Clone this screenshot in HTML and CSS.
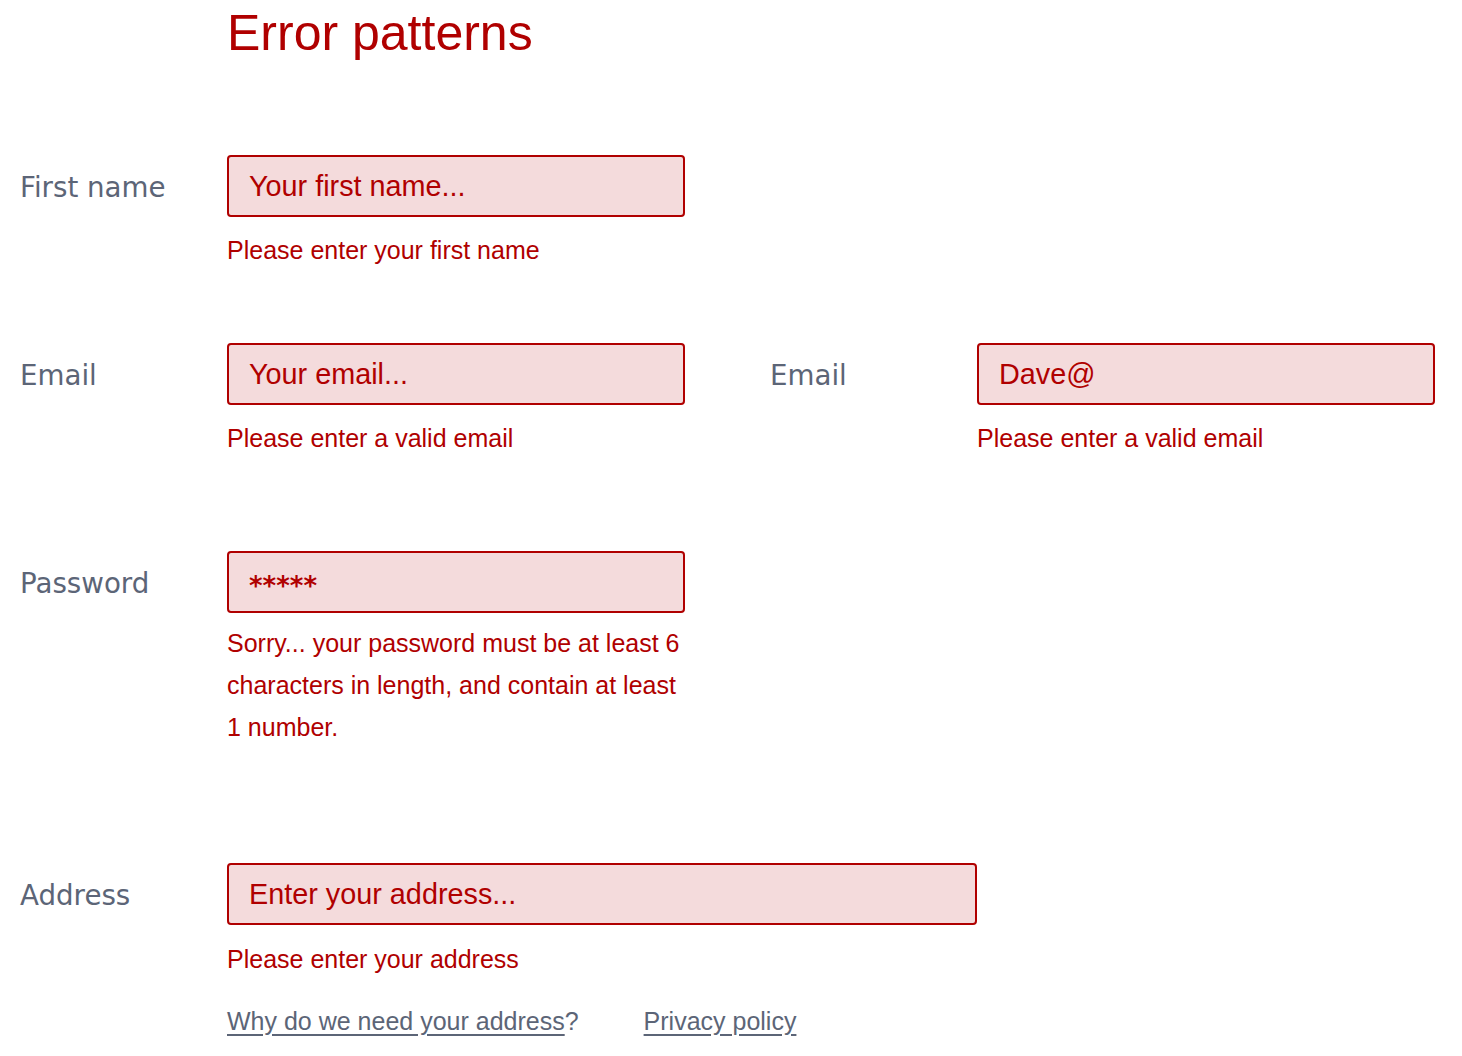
FILE: index.html
```html
<!DOCTYPE html>
<html lang="en">
<head>
<meta charset="utf-8">
<title>Error patterns</title>
<link rel="stylesheet" href="styles.css">
</head>
<body>
<main class="page">
  <h1 class="title">Error patterns</h1>

  <div class="row row-name">
    <div class="field">
      <label class="label" for="fname">First name</label>
      <div class="control">
        <input class="input" id="fname" type="text" placeholder="Your first name...">
        <p class="error">Please enter your first name</p>
      </div>
    </div>
  </div>

  <div class="row row-email">
    <div class="field">
      <label class="label" for="email1">Email</label>
      <div class="control">
        <input class="input" id="email1" type="text" placeholder="Your email...">
        <p class="error">Please enter a valid email</p>
      </div>
    </div>
    <div class="field">
      <label class="label" for="email2">Email</label>
      <div class="control">
        <input class="input" id="email2" type="text" value="Dave@">
        <p class="error">Please enter a valid email</p>
      </div>
    </div>
  </div>

  <div class="row row-password">
    <div class="field">
      <label class="label" for="pw">Password</label>
      <div class="control">
        <input class="input input-pw" id="pw" type="text" value="*****">
        <p class="error error-pw">Sorry... your password must be at least 6 characters in length, and contain at least 1 number.</p>
      </div>
    </div>
  </div>

  <div class="row row-address">
    <div class="field">
      <label class="label" for="addr">Address</label>
      <div class="control control-wide">
        <input class="input" id="addr" type="text" placeholder="Enter your address...">
        <p class="error error-addr">Please enter your address</p>
        <div class="links">
          <span class="link-item"><a class="link" href="#">Why do we need your address</a>?</span>
          <span class="link-item"><a class="link" href="#">Privacy policy</a></span>
        </div>
      </div>
    </div>
  </div>
</main>
</body>
</html>
```

FILE: styles.css
```css
* {
  box-sizing: border-box;
}

html, body {
  margin: 0;
  padding: 0;
  background: #ffffff;
}

body {
  font-family: "Liberation Sans", Arial, sans-serif;
  color: #b00000;
}

.page {
  padding: 5px 0 0 20px;
}

.title {
  margin: 0 0 0 207px;
  font-size: 50px;
  line-height: 57px;
  font-weight: 400;
  color: #b00000;
}

.row {
  display: flex;
  gap: 85px;
}

.row-name { margin-top: 93px; }
.row-email { margin-top: 72px; }
.row-password { margin-top: 92px; }
.row-address { margin-top: 115px; }

.field {
  display: flex;
}

.label {
  width: 207px;
  height: 62px;
  display: flex;
  align-items: center;
  padding-top: 3px;
  font-family: "DejaVu Sans", Verdana, sans-serif;
  font-size: 27.7px;
  color: #5c6577;
}

.control {
  width: 458px;
}

.control-wide {
  width: 750px;
}

.input {
  display: block;
  width: 100%;
  height: 62px;
  margin: 0;
  padding: 0 20px;
  border: 2px solid #b00000;
  border-radius: 4px;
  background: #f4dbdc;
  font-family: "Liberation Sans", Arial, sans-serif;
  font-size: 28.8px;
  color: #b00000;
  outline: none;
}

.input-pw {
  padding-top: 8px;
  font-family: "DejaVu Sans", Verdana, sans-serif;
  font-weight: 700;
  font-size: 26px;
}

.input::placeholder {
  color: #b00000;
  opacity: 1;
}

.error {
  margin: 12px 0 0;
  font-size: 25px;
  line-height: 42px;
  color: #b00000;
}

.error-pw {
  margin-top: 9px;
}

.error-addr {
  margin-top: 13px;
}

.links {
  display: flex;
  gap: 65px;
  margin-top: 20px;
  font-size: 25px;
  line-height: 42px;
  color: #5c6577;
}

.link {
  color: #5c6577;
  text-decoration: underline;
  text-underline-offset: 4px;
}
```
